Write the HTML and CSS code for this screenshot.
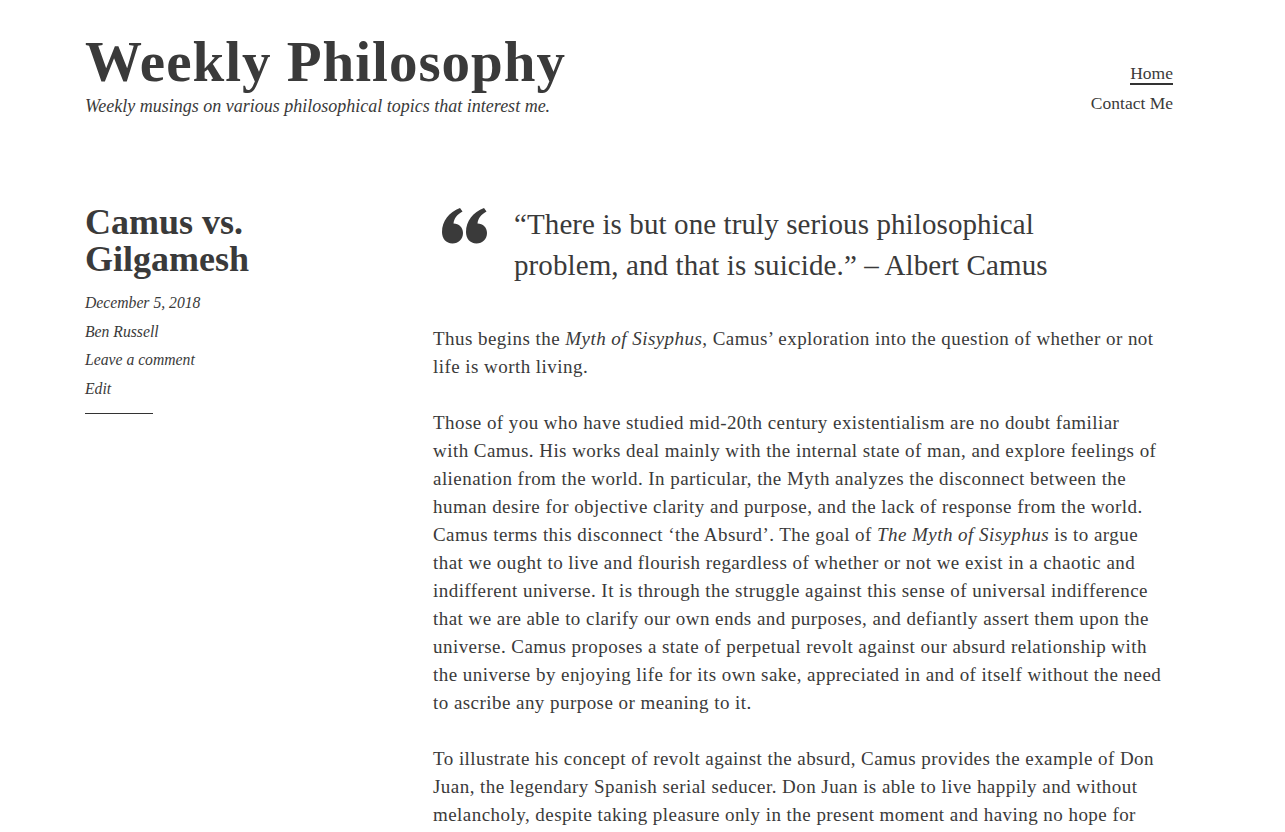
FILE: index.html
```html
<!DOCTYPE html>
<html>
<head>
<meta charset="utf-8">
<link rel="stylesheet" href="styles.css">
</head>
<body>
<div class="page">
  <header class="site-header">
    <div class="branding">
      <h1 class="site-title">Weekly Philosophy</h1>
      <p class="site-desc">Weekly musings on various philosophical topics that interest me.</p>
    </div>
    <nav class="nav">
      <a class="nav-link current" href="#">Home</a>
      <a class="nav-link" href="#">Contact Me</a>
    </nav>
  </header>
  <div class="content">
    <aside class="entry-side">
      <h2 class="entry-title">Camus vs. Gilgamesh</h2>
      <ul class="meta">
        <li>December 5, 2018</li>
        <li>Ben Russell</li>
        <li>Leave a comment</li>
        <li>Edit</li>
      </ul>
      <div class="meta-rule"></div>
    </aside>
    <article class="entry">
      <blockquote class="quote">
        <svg class="quote-mark" width="46" height="36" viewBox="0 0 46 36"><path d="M18 0l2.5 3.5C15 6.5 12 10.5 11.5 15.5 17 15.5 21 19.5 21 25c0 6-4.5 10.5-10.5 10.5C4 35.5 0 30.5 0 24 0 13 7 4 18 0zM42 0l2.5 3.5C39 6.5 36 10.5 35.5 15.5 41 15.5 45 19.5 45 25c0 6-4.5 10.5-10.5 10.5C28 35.5 24 30.5 24 24 24 13 31 4 42 0z" fill="#3a3a3a"/></svg>
        <p>“There is but one truly serious philosophical problem, and that is suicide.” – Albert Camus</p>
      </blockquote>
      <p>Thus begins the <em>Myth of Sisyphus</em>, Camus’ exploration into the question of whether or not life is worth living.</p>
      <p>Those of you who have studied mid-20th century existentialism are no doubt familiar<br>with Camus. His works deal mainly with the internal state of man, and explore feelings of alienation from the world. In particular, the Myth analyzes the disconnect between the human desire for objective clarity and purpose, and the lack of response from the world. Camus terms this disconnect ‘the Absurd’. The goal of <em>The Myth of Sisyphus</em> is to argue that we ought to live and flourish regardless of whether or not we exist in a chaotic and indifferent universe. It is through the struggle against this sense of universal indifference that we are able to clarify our own ends and purposes, and defiantly assert them upon the universe. Camus proposes a state of perpetual revolt against our absurd relationship with the universe by enjoying life for its own sake, appreciated in and of itself without the need to ascribe any purpose or meaning to it.</p>
      <p>To illustrate his concept of revolt against the absurd, Camus provides the example of Don Juan, the legendary Spanish serial seducer. Don Juan is able to live happily and without melancholy, despite taking pleasure only in the present moment and having no hope for the future.</p>
    </article>
  </div>
</div>
</body>
</html>
```
FILE: styles.css
```css
html, body { margin: 0; padding: 0; background: #fff; }
body { color: #3a3a3a; font-family: "Liberation Serif", "Times New Roman", serif; }
.page { padding: 30px 112px 0 85px; }
.site-header { display: flex; justify-content: space-between; align-items: flex-start; }
.site-title { margin: 0; font-size: 57px; font-weight: bold; line-height: 64px; letter-spacing: 1px; color: #3a3a3a; }
.site-desc { margin: 1px 0 0; font-style: italic; font-size: 18px; line-height: 22px; color: #3a3a3a; }
.nav { display: flex; flex-direction: column; align-items: flex-end; padding-top: 34px; gap: 7px; }
.nav-link { color: #3a3a3a; text-decoration: none; font-size: 17.5px; line-height: 23px; }
.nav-link.current { border-bottom: 2px solid #333; line-height: 19px; }
.content { display: flex; margin-top: 87px; }
.entry-side { width: 348px; flex: none; }
.entry-title { margin: 0; max-width: 260px; font-size: 36px; line-height: 37px; font-weight: bold; color: #3a3a3a; }
.meta { list-style: none; margin: 11px 0 0; padding: 0; font-style: italic; font-size: 15.7px; line-height: 28.5px; }
.meta-rule { width: 68px; height: 1px; background: #333; margin-top: 10px; }
.entry { flex: none; width: 730px; font-size: 19px; line-height: 28px; letter-spacing: 0.45px; }
.entry p { margin: 0 0 28px; }
.quote { display: flex; margin: 0 0 39px 9px; gap: 26px; }
.quote-mark { flex: none; margin-top: 4px; }
.quote p { margin: 0; font-size: 29px; line-height: 41px; letter-spacing: 0.1px; max-width: 560px; }
```
